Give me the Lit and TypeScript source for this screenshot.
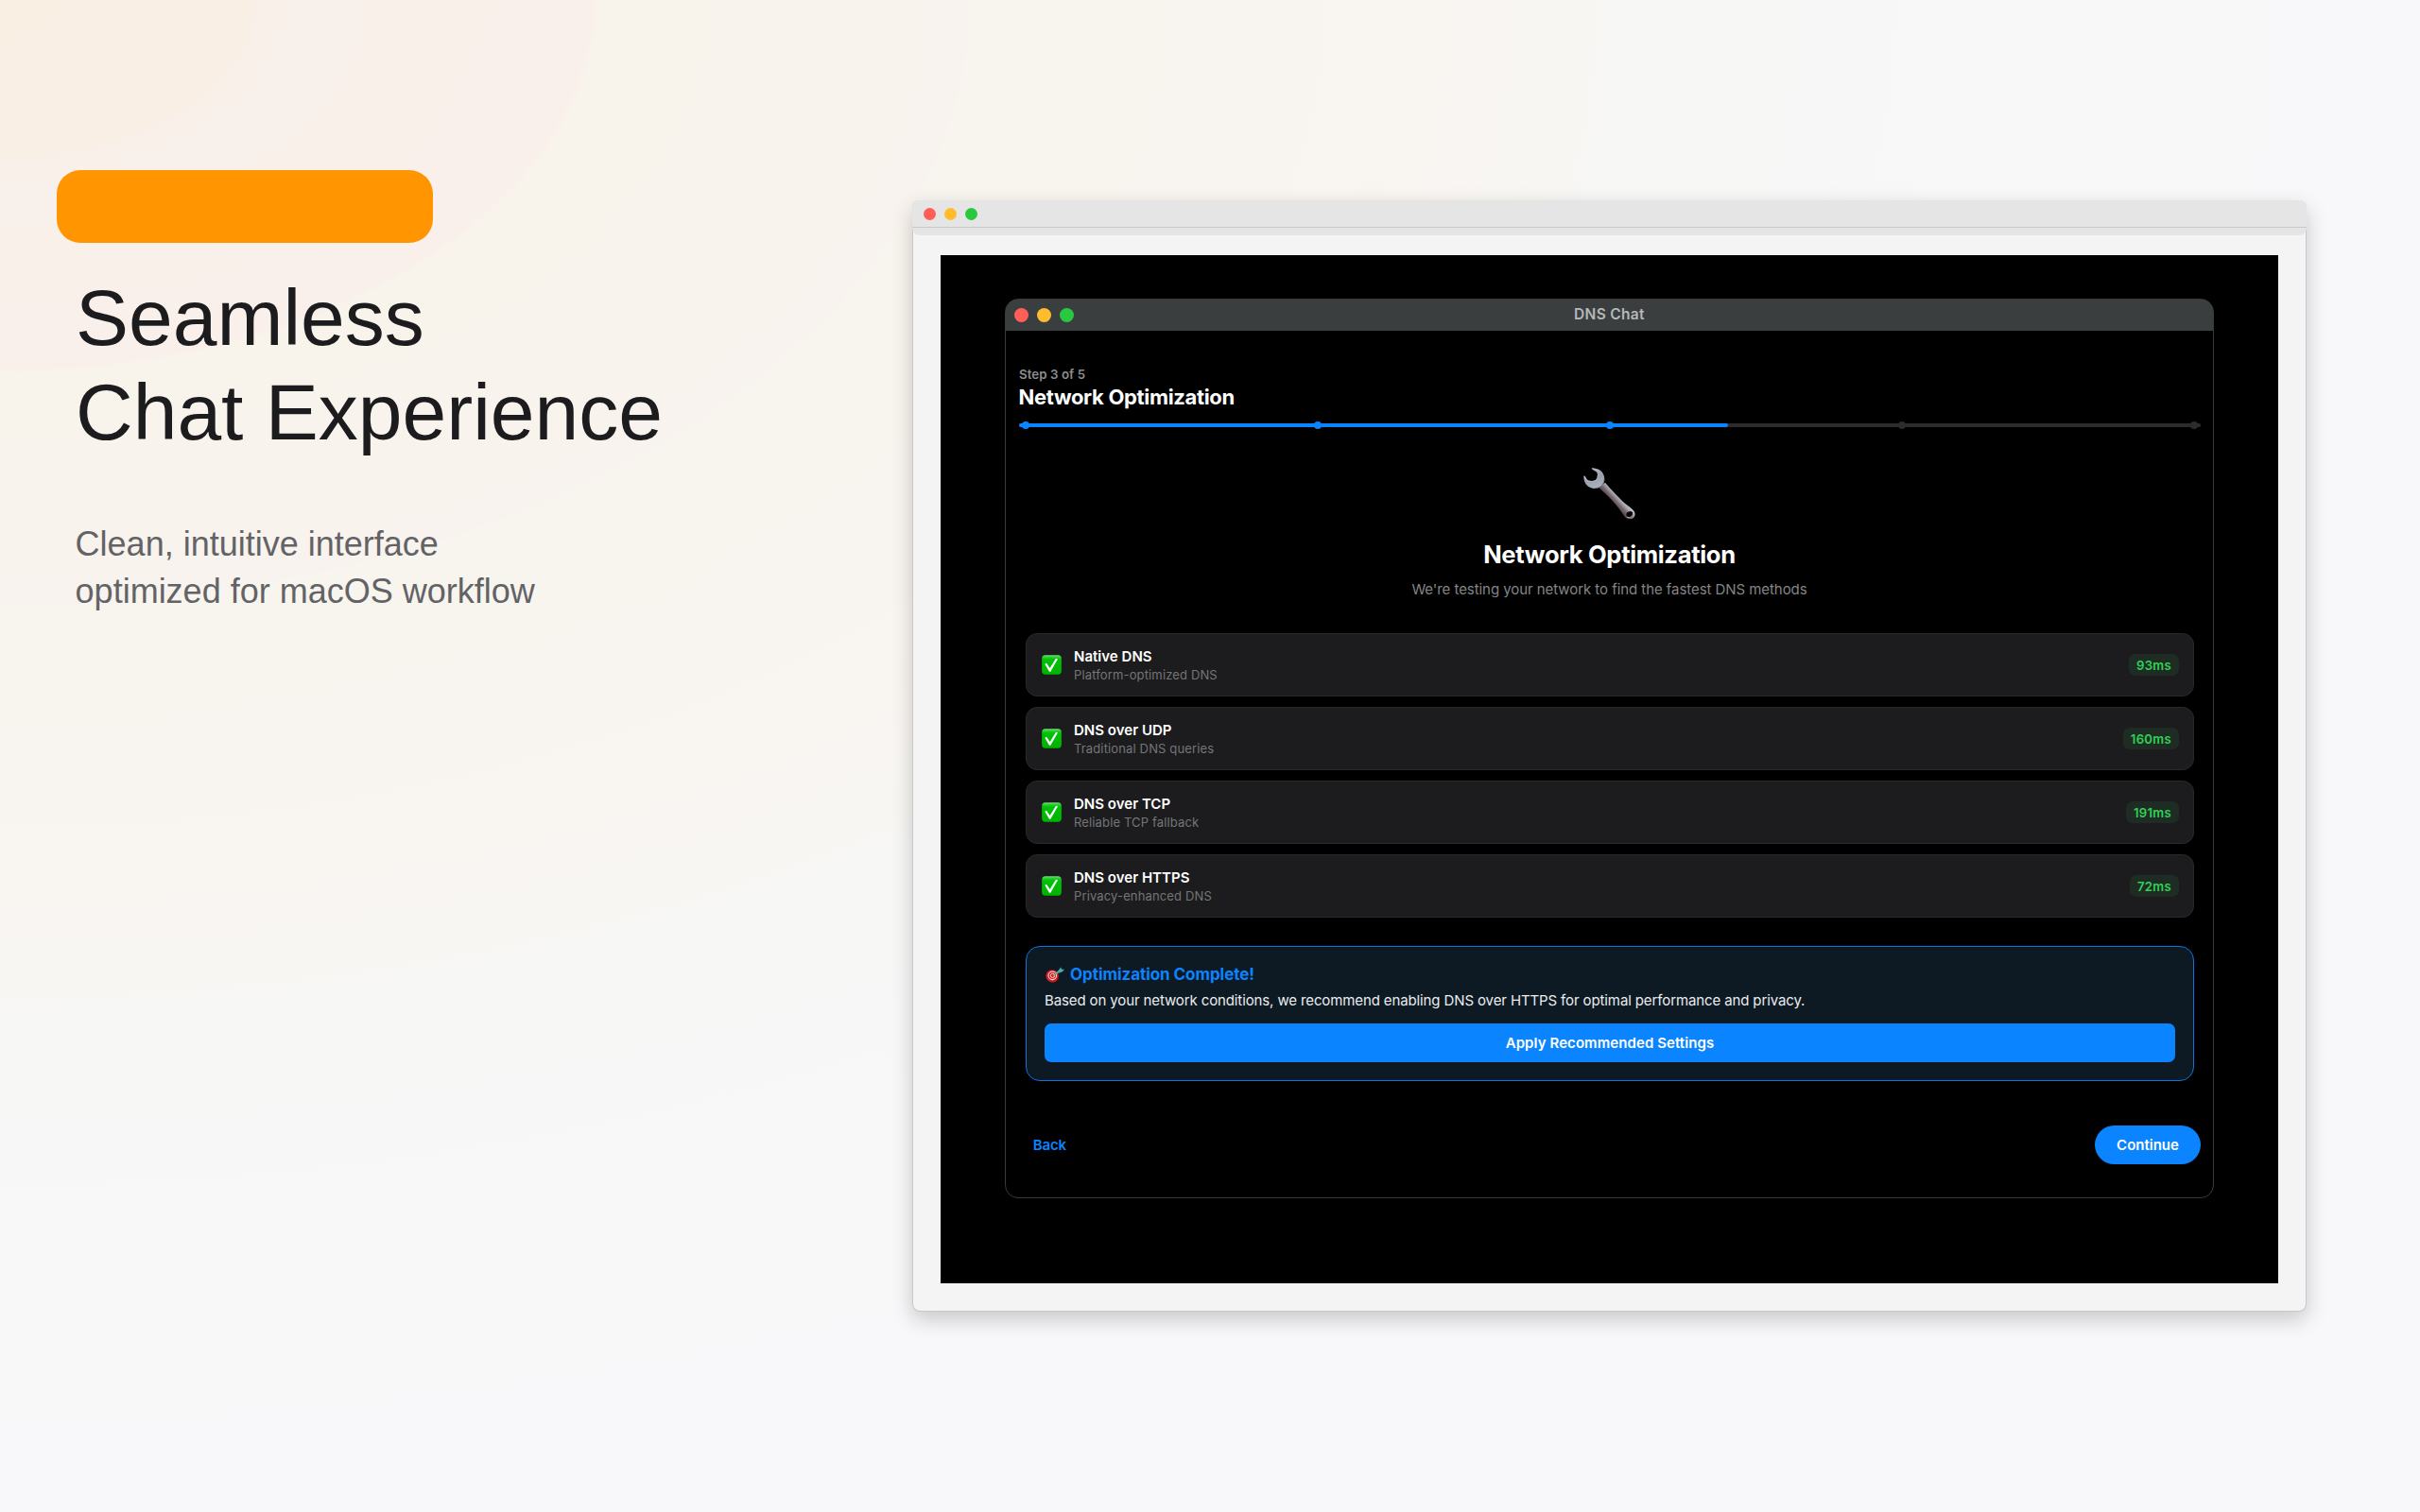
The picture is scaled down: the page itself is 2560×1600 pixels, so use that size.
import { LitElement, html, css } from "lit";
import { customElement, property } from "lit/decorators.js";
import { classMap } from "lit/directives/class-map.js";

interface Method {
  name: string;
  detail: string;
  latency: string;
}

const METHODS: Method[] = [
  { name: "Native DNS", detail: "Platform-optimized DNS", latency: "93ms" },
  { name: "DNS over UDP", detail: "Traditional DNS queries", latency: "160ms" },
  { name: "DNS over TCP", detail: "Reliable TCP fallback", latency: "191ms" },
  { name: "DNS over HTTPS", detail: "Privacy-enhanced DNS", latency: "72ms" },
];

const wrenchIcon = html`
  <svg class="wrench" viewBox="0 0 165 165" aria-hidden="true">
    <defs>
      <linearGradient id="handle" gradientUnits="userSpaceOnUse" x1="112" y1="84" x2="88" y2="106">
        <stop offset="0" stop-color="#c3cad8" />
        <stop offset="0.3" stop-color="#a9a9b1" />
        <stop offset="0.65" stop-color="#77696c" />
        <stop offset="1" stop-color="#54484c" />
      </linearGradient>
      <linearGradient id="jaw" x1="0" y1="0" x2="0.4" y2="1">
        <stop offset="0" stop-color="#b9bdc6" />
        <stop offset="0.6" stop-color="#9aa0ab" />
        <stop offset="1" stop-color="#a9b0be" />
      </linearGradient>
    </defs>
    <path
      d="M49 63 L69 47 C88 69 112 95 132 113 C144 123 155 129 161 138 C168 150 161 163 148 163 C138 163 133 158 129 152 C106 117 80 90 49 63 Z"
      fill="url(#handle)"
    />
    <path
      d="M26 2 C29 -1 34 1 38 2 C56 5 67 18 67 36 C67 54 54 66 36 66 C19 66 5 54 2 37 C1 31 0 27 3 25 C7 27 8 34 13 38 C20 44 34 44 41 37 C47 30 46 19 41 13 C37 9 29 8 26 2 Z"
      fill="url(#jaw)"
    />
    <path d="M4 28 C8 45 18 42 30 43 C41 42 46 32 45 24" fill="none" stroke="#c9d0dc" stroke-width="2" />
    <path d="M66 36 C66 52 54 65 36 65" fill="none" stroke="#59545c" stroke-width="2" />
    <ellipse cx="147" cy="148" rx="11" ry="9" transform="rotate(-25 147 148)" fill="#050505" />
    <path d="M138 156 C148 161 157 154 158 144" fill="none" stroke="#bdb4b7" stroke-width="3" />
  </svg>
`;

const checkIcon = html`
  <svg class="check" viewBox="0 0 63 63" aria-hidden="true">
    <defs>
      <linearGradient id="green" x1="0" y1="0" x2="0" y2="1">
        <stop offset="0" stop-color="#72e077" />
        <stop offset="0.1" stop-color="#2fce35" />
        <stop offset="0.22" stop-color="#00c108" />
        <stop offset="1" stop-color="#00b400" />
      </linearGradient>
    </defs>
    <rect x="0.5" y="1" width="62" height="61" rx="11" fill="url(#green)" />
    <path d="M10 29 L15 26 L26 42 L45 11 L51 13 L28 53 L24 53 Z" fill="#fff" />
  </svg>
`;

const targetIcon = html`
  <svg class="target" viewBox="0 0 60 50" aria-hidden="true">
    <ellipse cx="23" cy="30" rx="19.5" ry="19.5" fill="#9c1015" />
    <ellipse cx="20.5" cy="28.5" rx="19.5" ry="19.5" fill="#cf1d22" />
    <circle cx="22" cy="27.5" r="12.8" fill="none" stroke="#f0e2e2" stroke-width="3.2" />
    <circle cx="22.5" cy="27.5" r="6.6" fill="none" stroke="#f0e2e2" stroke-width="2.8" />
    <path d="M23 28 L35 20" stroke="#d9a33c" stroke-width="3" />
    <path d="M31 23 L48 10" stroke="#4fb3b0" stroke-width="6" />
    <path d="M39 14 L49 0 L51 8 L60 8 L54 15 L43 20 Z" fill="#3a9c9f" />
    <path d="M42 14 L50 5 M46 15 L56 10" stroke="#7fd6d0" stroke-width="1.6" />
  </svg>
`;

/** One tested DNS transport with its measured latency. */
@customElement("method-card")
class MethodCard extends LitElement {
  @property({ attribute: false }) method!: Method;

  static styles = css`
    :host {
      box-sizing: border-box;
      display: flex;
      align-items: flex-start;
      height: 67px;
      padding: 0 15px 0 16px;
      border: 1px solid #29292b;
      border-radius: 12px;
      background: #1c1c1e;
    }
    .check {
      flex: none;
      width: 21px;
      height: 21px;
      margin: 22px 13px 0 0;
    }
    .text {
      flex: 1;
      padding-top: 14px;
    }
    .name {
      font-size: 15px;
      font-weight: 600;
      line-height: 20px;
      letter-spacing: 0.02px;
      color: #fff;
    }
    .detail {
      font-size: 13px;
      line-height: 19px;
      letter-spacing: 0.14px;
      color: #757577;
    }
    .latency {
      box-sizing: border-box;
      height: 23px;
      margin-top: 21px;
      padding: 0 8px;
      border-radius: 7px;
      background: #1e2c23;
      color: #30d158;
      font-size: 13.2px;
      font-weight: 600;
      line-height: 25px;
      letter-spacing: 0.27px;
    }
  `;

  render() {
    return html`
      ${checkIcon}
      <div class="text">
        <div class="name">${this.method.name}</div>
        <div class="detail">${this.method.detail}</div>
      </div>
      <div class="latency">${this.method.latency}</div>
    `;
  }
}

/** Onboarding wizard step, drawn as a dark desktop window. */
@customElement("dns-window")
class DnsWindow extends LitElement {
  @property({ type: Number }) step = 3;
  @property({ type: Number }) total = 5;

  static styles = css`
    :host {
      box-sizing: border-box;
      display: flex;
      flex-direction: column;
      width: 1279px;
      height: 952px;
      border: 1px solid #3a3a3a;
      border-radius: 14px;
      background: #000;
      overflow: hidden;
      font-family: Inter, "Liberation Sans", sans-serif;
    }
    .titlebar {
      display: grid;
      grid-template-columns: 1fr auto 1fr;
      align-items: center;
      flex: none;
      height: 34px;
      margin: -1px -1px 0;
      border: 1px solid #5d6161;
      border-top-color: #737777;
      border-bottom: 0;
      border-radius: 14px 14px 0 0;
      box-sizing: border-box;
      background: #3b3e3f;
    }
    .lights {
      display: flex;
      gap: 9.3px;
      padding-left: 8.5px;
      margin-top: -1px;
    }
    .light {
      width: 15px;
      height: 15px;
      border-radius: 50%;
    }
    .red {
      background: #ff5f57;
    }
    .yellow {
      background: #febc2e;
    }
    .green {
      background: #28c840;
    }
    .caption {
      font-size: 15.5px;
      font-weight: 600;
      line-height: 20px;
      letter-spacing: 0.32px;
      color: #b6b8b9;
      margin-top: -2px;
    }
    .head {
      padding: 36px 13px 0 14px;
    }
    .step {
      font-size: 13.3px;
      font-weight: 600;
      line-height: 20px;
      letter-spacing: 0.05px;
      color: #8c8c8f;
    }
    .name {
      font-size: 22px;
      font-weight: 700;
      line-height: 28px;
      letter-spacing: -0.33px;
      color: #fff;
      margin-left: -0.5px;
    }
    .track {
      display: flex;
      align-items: center;
      height: 4px;
      margin-top: 14px;
      border-radius: 2px;
      background: #2c2c2e;
    }
    .fill {
      height: 4px;
      border-radius: 2px;
      background: #0a84ff;
    }
    .dots {
      display: flex;
      justify-content: space-between;
      height: 8px;
      margin-top: -6px;
      padding: 0 3.5px 0 3px;
    }
    .dot {
      width: 8px;
      height: 8px;
      border-radius: 50%;
      background: #2c2c2e;
    }
    .dot.done {
      background: #0a84ff;
    }
    .hero {
      display: flex;
      flex-direction: column;
      align-items: center;
      padding-top: 41px;
    }
    .wrench {
      width: 55px;
      height: 55px;
    }
    .heading {
      margin: 21px 0 0;
      font-size: 25.6px;
      font-weight: 700;
      line-height: 31px;
      letter-spacing: -0.34px;
      color: #fff;
    }
    .lead {
      margin-top: 11px;
      font-size: 15px;
      line-height: 21px;
      letter-spacing: -0.06px;
      color: #848486;
    }
    .methods {
      display: flex;
      flex-direction: column;
      gap: 11px;
      padding: 36px 20px 0 21px;
    }
    .callout {
      display: flex;
      flex-direction: column;
      box-sizing: border-box;
      height: 143px;
      margin: 30px 20px 0 21px;
      padding: 18px 19px 0;
      border: 1px solid #0a76e2;
      border-radius: 15px;
      background: #0d1a24;
    }
    .result {
      display: flex;
      align-items: center;
      gap: 6px;
      font-size: 17px;
      font-weight: 700;
      line-height: 22px;
      letter-spacing: -0.05px;
      color: #0a84ff;
    }
    .target {
      width: 20px;
      height: 17px;
      margin-left: 1px;
    }
    .advice {
      margin-top: 5px;
      font-size: 15px;
      line-height: 24px;
      letter-spacing: -0.118px;
      color: #ebeced;
    }
    .apply {
      margin-top: 12px;
      border-radius: 7px;
      background: #0a84ff;
      color: #fff;
      font-size: 15px;
      font-weight: 600;
      line-height: 41px;
      letter-spacing: 0.08px;
      text-align: center;
    }
    .footer {
      display: flex;
      align-items: center;
      justify-content: space-between;
      margin-top: 47px;
      padding: 0 13px 0 28.8px;
      font-size: 15px;
      line-height: 41px;
    }
    .back {
      color: #0a84ff;
      font-weight: 600;
      letter-spacing: -0.2px;
    }
    .continue {
      width: 112px;
      border-radius: 21px;
      background: #0a84ff;
      color: #fff;
      font-weight: 600;
      text-align: center;
    }
  `;

  render() {
    const dots = Array.from({ length: this.total }, (_, i) => i < this.step);
    return html`
      <div class="titlebar">
        <div class="lights">
          <div class="light red"></div>
          <div class="light yellow"></div>
          <div class="light green"></div>
        </div>
        <div class="caption">DNS Chat</div>
      </div>
      <div class="head">
        <div class="step">Step ${this.step} of ${this.total}</div>
        <div class="name">Network Optimization</div>
        <div class="track">
          <div class="fill" style="width:${(this.step / this.total) * 100}%"></div>
        </div>
        <div class="dots">${dots.map((done) => html`<div class=${classMap({ dot: true, done })}></div>`)}</div>
      </div>
      <div class="hero">
        ${wrenchIcon}
        <div class="heading">Network Optimization</div>
        <div class="lead">We're testing your network to find the fastest DNS methods</div>
      </div>
      <div class="methods">${METHODS.map((m) => html`<method-card .method=${m}></method-card>`)}</div>
      <div class="callout">
        <div class="result">${targetIcon}<span>Optimization Complete!</span></div>
        <div class="advice">Based on your network conditions, we recommend enabling DNS over HTTPS for optimal performance and privacy.</div>
        <div class="apply">Apply Recommended Settings</div>
      </div>
      <div class="footer">
        <div class="back">Back</div>
        <div class="continue">Continue</div>
      </div>
    `;
  }
}

@customElement("app-root")
class AppRoot extends LitElement {
  static styles = css`
    :host {
      box-sizing: border-box;
      display: flex;
      align-items: flex-start;
      width: 2560px;
      height: 1600px;
      overflow: hidden;
      background: radial-gradient(
        ellipse 2560px 1600px at 0 0,
        #f9efe3 0%,
        #f9efe5 10.3%,
        #f8f0e9 10.7%,
        #f8f0eb 15%,
        #faf0ea 15.2%,
        #faf0eb 24.4%,
        #f8f3eb 24.7%,
        #f8f3ec 33%,
        #f8f3ee 40%,
        #f8f5ef 40.3%,
        #f8f5f0 54.5%,
        #f9f5f1 55%,
        #f8f6f3 65%,
        #f7f7f5 67%,
        #f7f7f5 74%,
        #f8f7f8 74.6%,
        #f8f8f8 82%,
        #f8f8f8 91%,
        #f8f8fa 95%,
        #f8f8fb 100%
      );
    }
    .pitch {
      flex: none;
      width: 965px;
      padding-top: 180px;
      box-sizing: border-box;
      font-family: "Liberation Sans", Arial, sans-serif;
    }
    .pill {
      width: 398px;
      height: 77px;
      margin-left: 60px;
      border-radius: 25px;
      background: #ff9500;
    }
    .title {
      margin: 29px 0 0 80px;
      font-size: 84px;
      font-weight: 400;
      line-height: 100px;
      color: #1c1c1e;
    }
    .tagline {
      margin: 65px 0 0 79.6px;
      font-size: 36px;
      line-height: 50px;
      color: #636366;
    }
    .frame {
      display: flex;
      flex-direction: column;
      box-sizing: border-box;
      width: 1475px;
      height: 1176px;
      margin-top: 212px;
      border: 1px solid #c8c8c8;
      border-top: 0;
      border-radius: 8px;
      background: #f4f4f4;
      box-shadow: 0 8px 22px rgba(0, 0, 0, 0.2);
    }
    .bar {
      flex: none;
      height: 37px;
      margin: 0 -1px;
      border-radius: 8px;
      background: #e5e5e5;
    }
    .buttons {
      display: flex;
      gap: 9px;
      height: 28px;
      padding: 8px 12px 0;
      box-sizing: border-box;
    }
    .rule {
      height: 1px;
      background: #c8c8c8;
    }
    .button {
      width: 13px;
      height: 13px;
      border-radius: 50%;
    }
    .red {
      background: #ff5f57;
    }
    .yellow {
      background: #ffbd2e;
    }
    .green {
      background: #28c93f;
    }
    .screen {
      display: flex;
      justify-content: center;
      align-items: flex-start;
      box-sizing: border-box;
      width: 1415px;
      height: 1088px;
      margin: 21px 0 0 29px;
      padding-top: 46px;
      background: #000;
    }
  `;

  render() {
    return html`
      <div class="pitch">
        <div class="pill"></div>
        <div class="title">Seamless<br />Chat Experience</div>
        <div class="tagline">Clean, intuitive interface<br />optimized for macOS workflow</div>
      </div>
      <div class="frame">
        <div class="bar">
          <div class="buttons">
            <div class="button red"></div>
            <div class="button yellow"></div>
            <div class="button green"></div>
          </div>
          <div class="rule"></div>
        </div>
        <div class="screen"><dns-window></dns-window></div>
      </div>
    `;
  }
}
